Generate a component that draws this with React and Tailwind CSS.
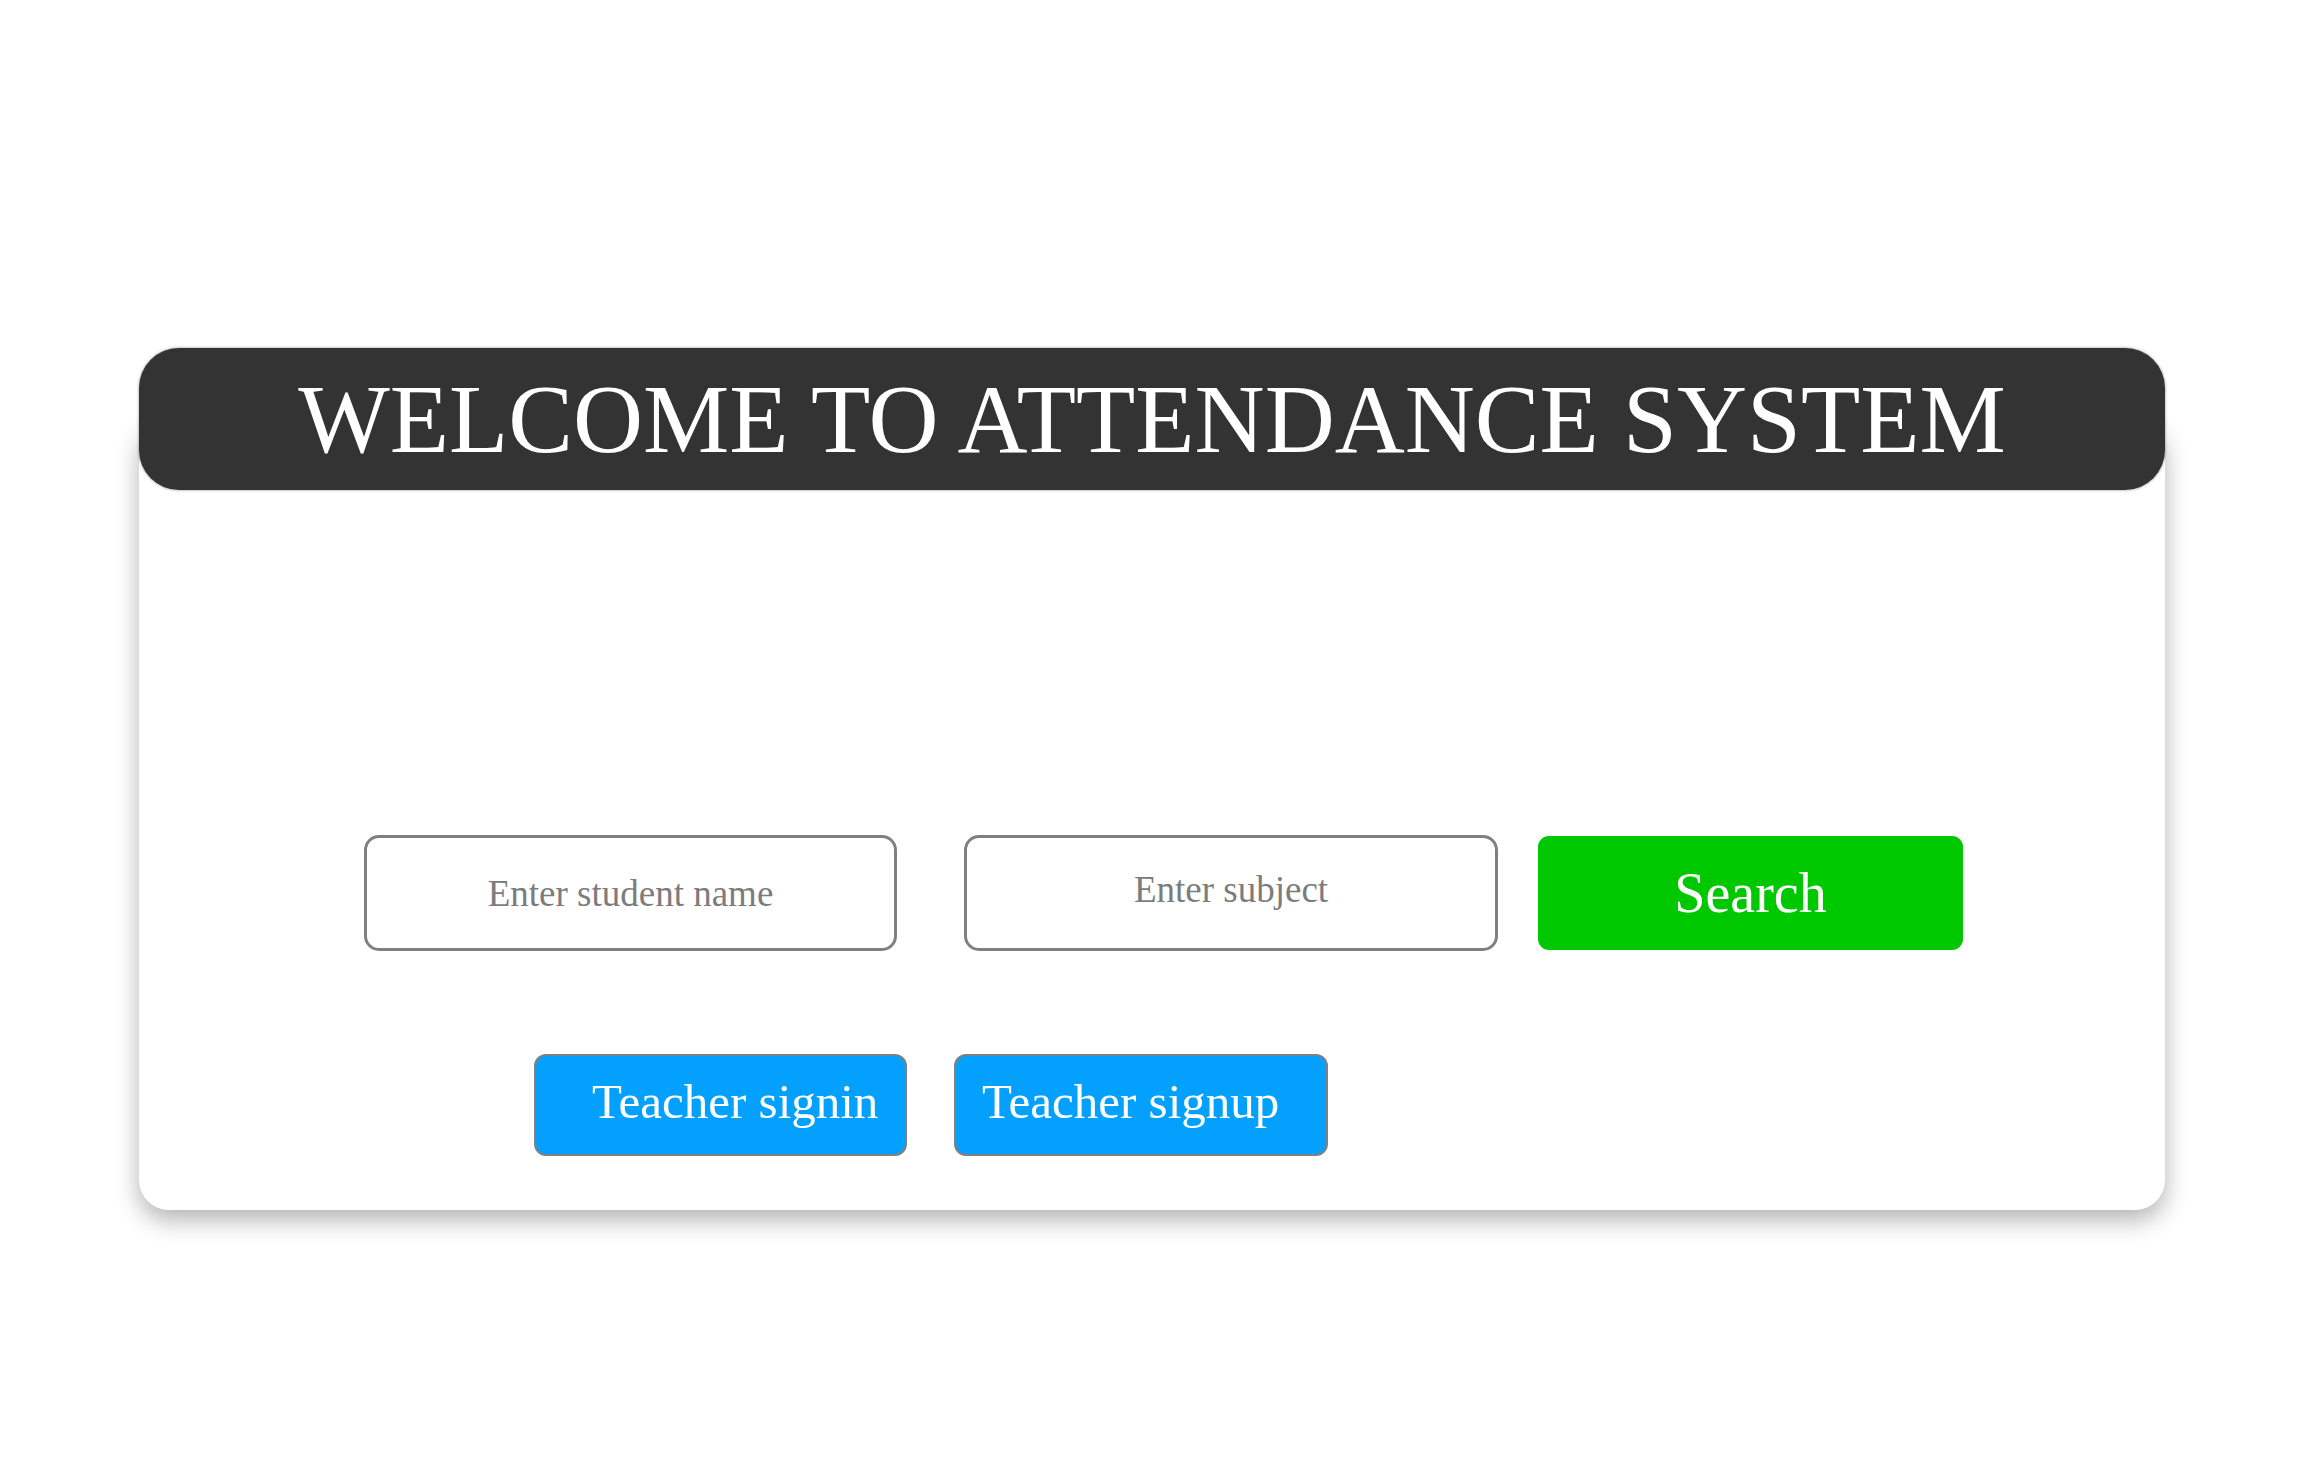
export default function App() {
  return (
    <div className="min-h-screen bg-white pt-[348px] font-['Liberation_Serif',serif]">
      <div className="ml-[139px] w-[2026px]">
        <h1 className="relative z-10 flex h-[142px] items-center justify-center rounded-[40px] bg-[#333333] text-[97px] leading-none text-white shadow-[0_0_3px_rgba(0,0,0,0.45)]">
          WELCOME TO ATTENDANCE SYSTEM
        </h1>
        <div className="-mt-[70px] rounded-[30px] bg-white pt-[415px] pb-[54px] shadow-[0_10px_24px_rgba(0,0,0,0.3)]">
          <div className="flex items-start pl-[225px]">
            <input
              placeholder="Enter student name"
              className="h-[116px] w-[533px] rounded-[15px] border-[3px] border-[#808080] bg-white text-center text-[37px] outline-none placeholder:text-[#7c7c7c]"
            />
            <input
              placeholder="Enter subject"
              className="ml-[67px] h-[116px] w-[534px] rounded-[15px] border-[3px] border-[#808080] bg-white pb-[8px] text-center text-[37px] outline-none placeholder:text-[#7c7c7c]"
            />
            <button className="mt-[1px] ml-[40px] h-[114px] w-[425px] rounded-[11px] bg-[#00c800] text-[56px] leading-none text-white">
              Search
            </button>
          </div>
          <div className="mt-[103px] flex pl-[395px]">
            <button className="h-[102px] w-[373px] rounded-[12px] border-2 border-[#808080] bg-[#03a0fd] pb-[8px] pl-[56px] text-left text-[49px] leading-none text-white">
              Teacher signin
            </button>
            <button className="ml-[47px] h-[102px] w-[374px] rounded-[12px] border-2 border-[#808080] bg-[#03a0fd] pb-[8px] pl-[26px] text-left text-[49px] leading-none text-white">
              Teacher signup
            </button>
          </div>
        </div>
      </div>
    </div>
  );
}
